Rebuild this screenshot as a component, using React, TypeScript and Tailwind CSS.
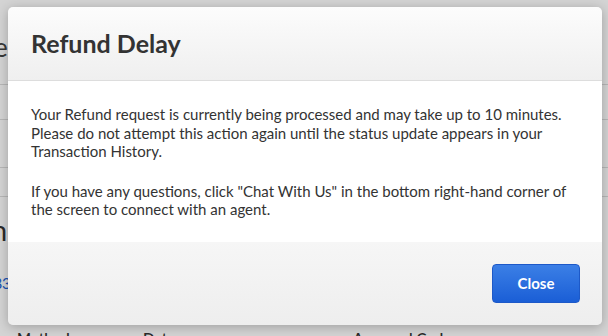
import React from 'react'

export default function App() {
  return (
    <div
      className="relative w-[608px] h-[336px] overflow-hidden bg-white"
      style={{ fontFamily: 'Lato, "Open Sans", sans-serif' }}
    >
      {/* Page behind the dialog */}
      <div className="flex flex-col text-[#333]">
        <div className="h-[85px] border-b border-[#ddd] flex items-center">
          <h2 className="ml-[-96px] mt-[10px] text-[26px] text-[#444]">Purchase</h2>
        </div>
        <div className="h-[35px] border-b border-[#ddd]" />
        <div className="h-[48px] border-b border-[#ddd]" />
        <div className="h-[29px] border-b border-[#ddd]" />
        <div className="h-[16px]" />
        <h2 className="ml-[-134px] text-[28px] leading-[34px] text-[#333]">Transaction</h2>
        <div className="h-[25px]" />
        <a className="ml-[-24px] text-[15px] text-[#1a62d6]">1083</a>
        <div className="h-[32px]" />
        <div className="flex text-[15px] font-semibold text-[#333]">
          <span className="ml-[17px] w-[126px]">Method</span>
          <span className="w-[210px]">Date</span>
          <span>Approval Code</span>
        </div>
      </div>

      {/* Overlay */}
      <div className="absolute inset-0 bg-black/[0.17]" />

      {/* Dialog */}
      <div className="absolute left-[8px] top-[7px] w-[594px] h-[318px] rounded-[5px] overflow-hidden flex flex-col shadow-[0_2px_12px_rgba(0,0,0,0.25)]">
        <div className="h-[74px] shrink-0 flex items-center px-[23px] bg-gradient-to-b from-[#fcfcfc] to-[#efefef] border-b border-[#dddddd]">
          <h1 className="text-[25px] font-bold text-[#333]">Refund Delay</h1>
        </div>
        <div className="h-[161px] shrink-0 bg-white px-[23px] pt-[24px] text-[15px] leading-[18.5px] text-[#333]">
          <p>
            Your Refund request is currently being processed and may take up to 10 minutes.
            Please do not attempt this action again until the status update appears in your
            Transaction History.
          </p>
          <p className="mt-[21px]">
            If you have any questions, click "Chat With Us" in the bottom right-hand corner of
            the screen to connect with an agent.
          </p>
        </div>
        <div className="flex-1 flex items-center justify-end px-[22px] bg-gradient-to-b from-[#f6f6f6] to-[#eeeeee]">
          <button className="w-[88px] h-[39px] rounded-[4px] border border-[#1d59c8] bg-gradient-to-b from-[#3b7fe6] to-[#1a5ed6] text-white text-[15px] font-bold">
            Close
          </button>
        </div>
      </div>
    </div>
  )
}
